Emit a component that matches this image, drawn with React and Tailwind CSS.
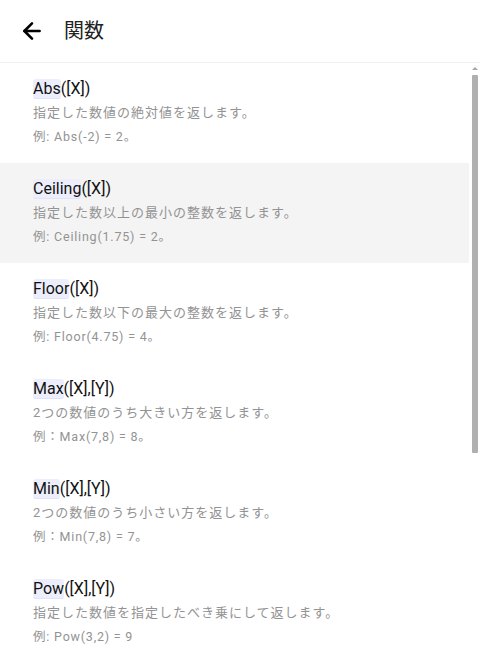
import { ArrowLeft } from 'lucide-react';

const funcs = [
  { name: 'Abs', args: '([X])', desc: '指定した数値の絶対値を返します。', ex: '例: Abs(-2) = 2。' },
  { name: 'Ceiling', args: '([X])', desc: '指定した数以上の最小の整数を返します。', ex: '例: Ceiling(1.75) = 2。', active: true },
  { name: 'Floor', args: '([X])', desc: '指定した数以下の最大の整数を返します。', ex: '例: Floor(4.75) = 4。' },
  { name: 'Max', args: '([X],[Y])', desc: '2つの数値のうち大きい方を返します。', ex: '例：Max(7,8) = 8。' },
  { name: 'Min', args: '([X],[Y])', desc: '2つの数値のうち小さい方を返します。', ex: '例：Min(7,8) = 7。' },
  { name: 'Pow', args: '([X],[Y])', desc: '指定した数値を指定したべき乗にして返します。', ex: '例: Pow(3,2) = 9' },
];

export default function App() {
  return (
    <div
      className="h-[661px] w-[480px] bg-white flex flex-col overflow-hidden"
      style={{ fontFamily: 'Roboto, "Noto Sans CJK JP", sans-serif' }}
    >
      {/* Header */}
      <header className="h-[63px] shrink-0 flex items-center border-b border-[#f0f0f0]">
        <button className="ml-[19px] w-[26px] flex items-center justify-center text-black">
          <ArrowLeft size={26} strokeWidth={2.4} />
        </button>
        <h1 className="ml-[19px] text-[20px] text-[#222]">関数</h1>
      </header>

      {/* List + scrollbar */}
      <div className="flex flex-1 min-h-0">
        <ul className="flex-1 overflow-hidden">
          {funcs.map((f) => (
            <li key={f.name} className={`h-[100px] pl-[33px] pt-[15px] ${f.active ? 'bg-[#f4f4f4]' : ''}`}>
              <div className="text-[16px] leading-[22px] text-[#111]">
                <span className="bg-[#eceefc] rounded-[3px] border-b border-[#dfe2fa]">{f.name}</span>
                {f.args}
              </div>
              <p className="text-[13px] tracking-[1px] leading-[20px] mt-[3px] text-[#939393]">{f.desc}</p>
              <p className="text-[12.5px] tracking-[0.8px] leading-[20px] mt-[4px] text-[#939393]">{f.ex}</p>
            </li>
          ))}
        </ul>
        <div className="w-[11px] shrink-0 flex flex-col items-center pt-[4px]">
          <div className="w-0 h-0 border-l-[3px] border-r-[3px] border-b-[3px] border-l-transparent border-r-transparent border-b-[#a8a8a8]" />
          <div className="mt-[5px] w-[6px] h-[378px] bg-[#b0b0b0] rounded-[1px]" />
        </div>
      </div>
    </div>
  );
}
